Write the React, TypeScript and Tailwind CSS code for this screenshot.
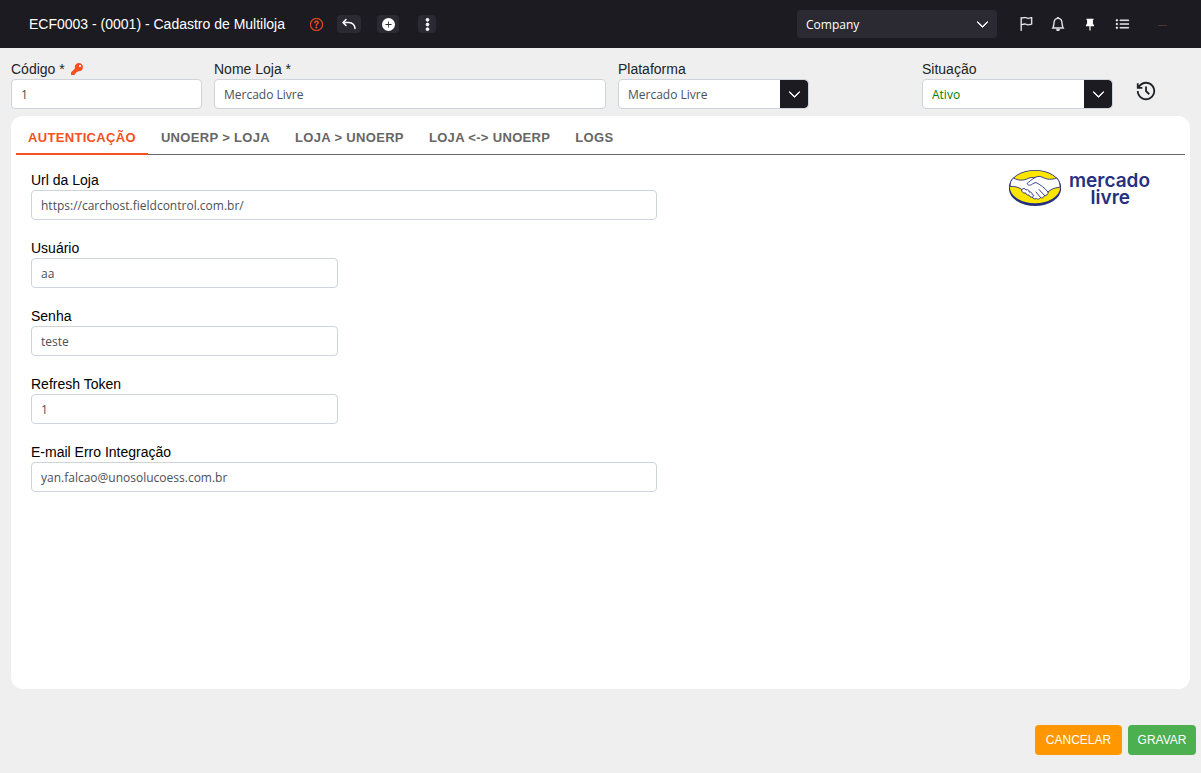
import type { ReactNode } from 'react'
import {
  BsBell,
  BsChevronDown,
  BsFlag,
  BsListUl,
  BsPlusCircleFill,
  BsQuestionCircle,
  BsThreeDotsVertical,
} from 'react-icons/bs'
import { FaKey } from 'react-icons/fa'
import { PiArrowBendUpLeftBold } from 'react-icons/pi'
import { RiHistoryLine, RiPushpin2Fill } from 'react-icons/ri'

const tabs = ['AUTENTICAÇÃO', 'UNOERP > LOJA', 'LOJA > UNOERP', 'LOJA <-> UNOERP', 'LOGS']

const authFields = [
  { id: 'url', label: 'Url da Loja', value: 'https://carchost.fieldcontrol.com.br/', wide: true },
  { id: 'usuario', label: 'Usuário', value: 'aa' },
  { id: 'senha', label: 'Senha', value: 'teste' },
  { id: 'refresh', label: 'Refresh Token', value: '1' },
  { id: 'email', label: 'E-mail Erro Integração', value: 'yan.falcao@unosolucoess.com.br', wide: true },
]

type FieldProps = { id: string; label: string; value: string; icon?: ReactNode; className?: string }

function TextField({ id, label, value, icon, className = '' }: FieldProps) {
  return (
    <div className={className}>
      <label htmlFor={id} className="flex h-5 items-center text-sm">
        {label}
        {icon}
      </label>
      <input
        id={id}
        defaultValue={value}
        className="block h-[30px] w-full rounded border border-[#ced4da] bg-white px-[9px] font-['Open_Sans',sans-serif] text-xs text-[#495057] outline-none"
      />
    </div>
  )
}

function SelectField({ id, label, value, className = 'text-[#495057]' }: FieldProps) {
  return (
    <div>
      <label htmlFor={id} className="flex h-5 items-center text-sm">{label}</label>
      <div className="grid h-[30px] overflow-hidden rounded border border-[#ced4da] bg-white">
        <select
          id={id}
          className={`col-start-1 row-start-1 w-full appearance-none px-[9px] pt-px font-['Open_Sans',sans-serif] text-xs outline-none ${className}`}
        >
          <option>{value}</option>
        </select>
        <span className="pointer-events-none col-start-1 row-start-1 flex w-7 items-center justify-center justify-self-end rounded-r bg-[#1c1b22] text-white">
          <BsChevronDown size={13} strokeWidth={1} />
        </span>
      </div>
    </div>
  )
}

function MercadoLivreLogo() {
  return (
    <div className="flex items-start gap-2 text-[#26307f]">
      <svg width="52" height="38" viewBox="0 1 52 38">
        <ellipse cx="26" cy="20" rx="26" ry="17" fill="#26307f" />
        <ellipse cx="26" cy="18" rx="26" ry="17" fill="#26307f" />
        <ellipse cx="26" cy="18" rx="25.2" ry="16.2" fill="#ffe600" />
        <path
          d="M4.500 9C9 11.500 14 12 19 9.500C22 8 24 8.500 26 8.500C29 7 31 7 34 8.500C38 10.500 43 11 47.500 9C50.500 12 51.500 16 50.500 18.500C45 18.500 42 20.500 39 23C39.500 25.500 37 27 35.500 26.500C35 28.500 33 29.500 31.500 28.500C30.500 30.500 28.500 30.500 27.500 29.500C25.500 30.500 23.500 29.500 23.500 28C21.500 28.500 20 27.500 20 26C18 26.500 16.500 25 17 24C14 24.500 12 22.500 13 20.500C9 18 5 17 1.200 17.500C0.800 14 2 11 4.500 9Z"
          fill="#fff"
          stroke="#26307f"
          strokeWidth="0.9"
          strokeLinejoin="round"
        />
        <path
          d="M26 8.500C23 10 20 13 18 14.500C19 17 22 16.500 24 14.500L27 13.500C31 15.500 36 19 39 23M30 20.500L35.500 26.500M27 23L31.500 28.500M13 20.500C14 19 16 19 17 21C19 20 20.500 21.500 20 23C22 22.500 23.500 24 23 25.500C25 25.500 25.500 27 23.500 28"
          fill="none"
          stroke="#26307f"
          strokeWidth="0.9"
          strokeLinecap="round"
          strokeLinejoin="round"
        />
      </svg>
      <div className="flex flex-col pr-5 pt-[2px] text-right font-['Inter',sans-serif] text-[19px]/[17px] font-semibold">
        <span>mercado</span>
        <span className="pr-5">livre</span>
      </div>
    </div>
  )
}

function TopBar() {
  return (
    <header className="flex h-12 items-center bg-[#1c1b22] pl-[29px] pr-[34px] text-white">
      <h1 className="text-sm">ECF0003 - (0001) - Cadastro de Multiloja</h1>
      <button aria-label="Ajuda" className="ml-[25px] text-[#f4511e]">
        <BsQuestionCircle size={13} strokeWidth={0.5} />
      </button>
      <button aria-label="Voltar" className="ml-[14px] flex h-[18px] w-6 items-center justify-center rounded bg-[#2b2a33]">
        <PiArrowBendUpLeftBold size={16} />
      </button>
      <button aria-label="Novo" className="ml-4 flex h-[18px] w-[22px] items-center justify-center rounded bg-[#2b2a33]">
        <BsPlusCircleFill size={13} />
      </button>
      <button aria-label="Mais opções" className="ml-[19px] flex h-[18px] w-[18px] items-center justify-center rounded bg-[#2b2a33]">
        <BsThreeDotsVertical size={15} strokeWidth={1} />
      </button>

      <div className="ml-auto grid h-7 w-[200px] items-center rounded bg-[#2b2a33]">
        <select
          aria-label="Empresa"
          className="col-start-1 row-start-1 h-full appearance-none px-[9px] pt-px font-['Open_Sans',sans-serif] text-xs outline-none"
        >
          <option>Company</option>
        </select>
        <BsChevronDown size={13} strokeWidth={1} className="pointer-events-none col-start-1 row-start-1 mr-2 justify-self-end" />
      </div>
      <div className="ml-[22px] flex items-center gap-[18px]">
        <button aria-label="Marcadores"><BsFlag size={14} strokeWidth={0.4} /></button>
        <button aria-label="Notificações"><BsBell size={14} strokeWidth={0.4} /></button>
        <button aria-label="Fixar"><RiPushpin2Fill size={14} /></button>
        <button aria-label="Menu"><BsListUl size={15} strokeWidth={0.4} /></button>
        <span className="ml-[10px] mt-[3px] h-px w-[9px] bg-[#4a3630]" />
      </div>
    </header>
  )
}

export default function App() {
  return (
    <div className="flex min-h-screen flex-col bg-[#efefef] font-['Liberation_Sans',sans-serif] text-[#212529]">
      <TopBar />

      {/* Store header */}
      <div className="grid grid-cols-[191fr_392fr_191fr_89fr_191fr_65fr] gap-3 px-[11px] pb-[7px] pt-[11px]">
        <TextField id="codigo" label="Código *" value="1" icon={<FaKey size={12} className="ml-[6px] text-[#f4511e]" />} />
        <TextField id="nome" label="Nome Loja *" value="Mercado Livre" />
        <SelectField id="plataforma" label="Plataforma" value="Mercado Livre" />
        <span />
        <SelectField id="situacao" label="Situação" value="Ativo" className="text-[#008000]" />
        <button aria-label="Histórico" className="flex items-center pl-[10px] pt-[14px]">
          <RiHistoryLine size={22} />
        </button>
      </div>

      {/* Tab panel */}
      <main className="mx-[11px] flex-1 rounded-xl bg-white px-[5px]">
        <nav role="tablist" className="flex h-[39px] gap-px border-b border-[#666666] pt-[6px]">
          {tabs.map((tab, i) => (
            <button
              key={tab}
              role="tab"
              aria-selected={i === 0}
              className={`-mb-px border-b-2 px-3 text-[13px] font-bold tracking-wide ${
                i === 0 ? 'border-[#f4511e] text-[#f4511e]' : 'border-transparent text-[#666666]'
              }`}
            >
              {tab}
            </button>
          ))}
        </nav>
        <div className="flex items-start justify-between px-[15px] pt-[15px] text-black">
          <div className="flex w-[55%] flex-col gap-[18px]">
            {authFields.map(({ wide, ...field }) => (
              <TextField key={field.id} {...field} className={wide ? 'w-full' : 'w-[49%]'} />
            ))}
          </div>
          <MercadoLivreLogo />
        </div>
      </main>

      <footer className="flex justify-end gap-[6px] px-[5px] pb-[18px] pt-9 text-xs text-white">
        <button className="h-[30px] w-[87px] rounded bg-[#ff9800]">CANCELAR</button>
        <button className="h-[30px] w-[68px] rounded bg-[#4caf50]">GRAVAR</button>
      </footer>
    </div>
  )
}
